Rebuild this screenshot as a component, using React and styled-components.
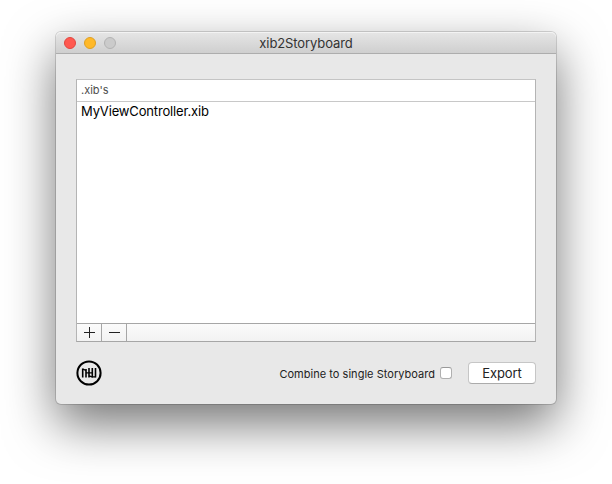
import React from "react";
import styled, { createGlobalStyle } from "styled-components";

const GlobalStyle = createGlobalStyle`
  * { box-sizing: border-box; }
  body {
    margin: 0;
    background: #fff;
    font-family: Inter, Roboto, sans-serif;
    overflow: hidden;
  }
`;

const Desktop = styled.main`
  width: 612px;
  height: 484px;
  padding: 32px 56px 80px;
  overflow: hidden;
`;

const Window = styled.section`
  width: 500px;
  height: 372px;
  display: flex;
  flex-direction: column;
  border-radius: 5px;
  background: #e8e8e8;
  box-shadow: 0 0 0 1px rgba(0, 0, 0, 0.15), 0 20px 50px rgba(0, 0, 0, 0.55);
`;

const TitleBar = styled.header`
  height: 22px;
  flex: none;
  display: grid;
  grid-template-columns: 1fr auto 1fr;
  align-items: center;
  padding: 0 8px;
  border-radius: 5px 5px 0 0;
  border-bottom: 1px solid #adadad;
  background: linear-gradient(#e6e6e6, #cfcfcf);
  box-shadow: inset 0 1px #f3f3f3;
`;

const Lights = styled.div`
  display: flex;
  gap: 8px;
`;

const Light = styled.span`
  width: 12px;
  height: 12px;
  border-radius: 50%;
  background: ${(p) => p.$fill};
  border: 1px solid ${(p) => p.$edge};
`;

const Title = styled.h1`
  margin: 0;
  font-size: 13px;
  line-height: 20px;
  font-weight: 400;
  letter-spacing: -0.1px;
  color: #333;
`;

const Content = styled.div`
  flex: 1;
  padding: 25px 20px 20px;
  display: flex;
  flex-direction: column;
`;

const Table = styled.div`
  height: 263px;
  display: flex;
  flex-direction: column;
  border: 1px solid #b4b4b4;
  border-top-color: #c4c4c4;
  border-bottom-color: #a6a6a6;
  background: #fff;
`;

const ColumnHeader = styled.div`
  height: 22px;
  padding-left: 4px;
  border-bottom: 1px solid #c8c8c8;
  font-size: 11px;
  line-height: 21px;
  letter-spacing: 0;
  color: #4d4d4d;
`;

const Row = styled.div`
  flex: 1;
  padding-left: 4px;
  font-size: 13px;
  line-height: 19px;
  letter-spacing: -0.15px;
  color: #000;
`;

const TableFooter = styled.div`
  height: 18px;
  display: flex;
  border-top: 1px solid #a6a6a6;
  background: linear-gradient(#fbfbfb, #f2f2f2);
`;

const FooterButton = styled.button`
  width: 25px;
  height: 17px;
  padding: 0;
  border: 0;
  border-right: 1px solid #a6a6a6;
  background: transparent;
  display: flex;
`;

const Controls = styled.div`
  display: flex;
  align-items: center;
  height: 26px;
  margin-top: 18px;
`;

const Option = styled.label`
  margin-left: auto;
  display: flex;
  align-items: center;
  gap: 5px;
  font-size: 11px;
  line-height: 14px;
  letter-spacing: 0.03px;
  color: #222;
  white-space: nowrap;
`;

const OptionText = styled.span`
  padding-top: 2px;
`;

const Checkbox = styled.input`
  appearance: none;
  width: 12px;
  height: 12px;
  margin: 0;
  border: 1px solid #b0b0b0;
  border-top-color: #999;
  border-radius: 3px;
  background: #fff;
`;

const ExportButton = styled.button`
  width: 68px;
  height: 22px;
  margin-left: 16px;
  padding: 0;
  border: 1px solid #c6c6c6;
  border-bottom-color: #ababab;
  border-radius: 4px;
  background: #fff;
  font: 400 13px/20px Inter, Roboto, sans-serif;
  letter-spacing: -0.1px;
  color: #222;
`;

const Logo = () => (
  <svg width="26" height="26" viewBox="0 0 26 26" fill="none" stroke="#000">
    <circle cx="13" cy="13" r="11.6" strokeWidth="2" />
    <path d="M6.7 17.5V8.5M10 9V17.5M13 8V17.5M16.3 8V17.5M19.5 8V17.5" strokeWidth="1.6" />
    <path d="M6.7 9.2L10 10.4M10 12.8H16.3M13 16L16.3 16.8H19.5" strokeWidth="1.3" />
  </svg>
);

export default function App() {
  return (
    <Desktop>
      <GlobalStyle />
      <Window>
        <TitleBar>
          <Lights>
            <Light $fill="#ff5950" $edge="#e2463f" />
            <Light $fill="#ffb929" $edge="#dfa023" />
            <Light $fill="#cbcbcb" $edge="#b3b3b3" />
          </Lights>
          <Title>xib2Storyboard</Title>
        </TitleBar>
        <Content>
          <Table>
            <ColumnHeader>.xib's</ColumnHeader>
            <Row>MyViewController.xib</Row>
            <TableFooter>
              <FooterButton aria-label="Add">
                <svg width="24" height="17" stroke="#222" strokeWidth="1">
                  <path d="M7 8.5H18M12.5 3V14" />
                </svg>
              </FooterButton>
              <FooterButton aria-label="Remove">
                <svg width="24" height="17" stroke="#222" strokeWidth="1">
                  <path d="M7 8.5H18" />
                </svg>
              </FooterButton>
            </TableFooter>
          </Table>
          <Controls>
            <Logo />
            <Option>
              <OptionText>Combine to single Storyboard</OptionText>
              <Checkbox type="checkbox" />
            </Option>
            <ExportButton>Export</ExportButton>
          </Controls>
        </Content>
      </Window>
    </Desktop>
  );
}
